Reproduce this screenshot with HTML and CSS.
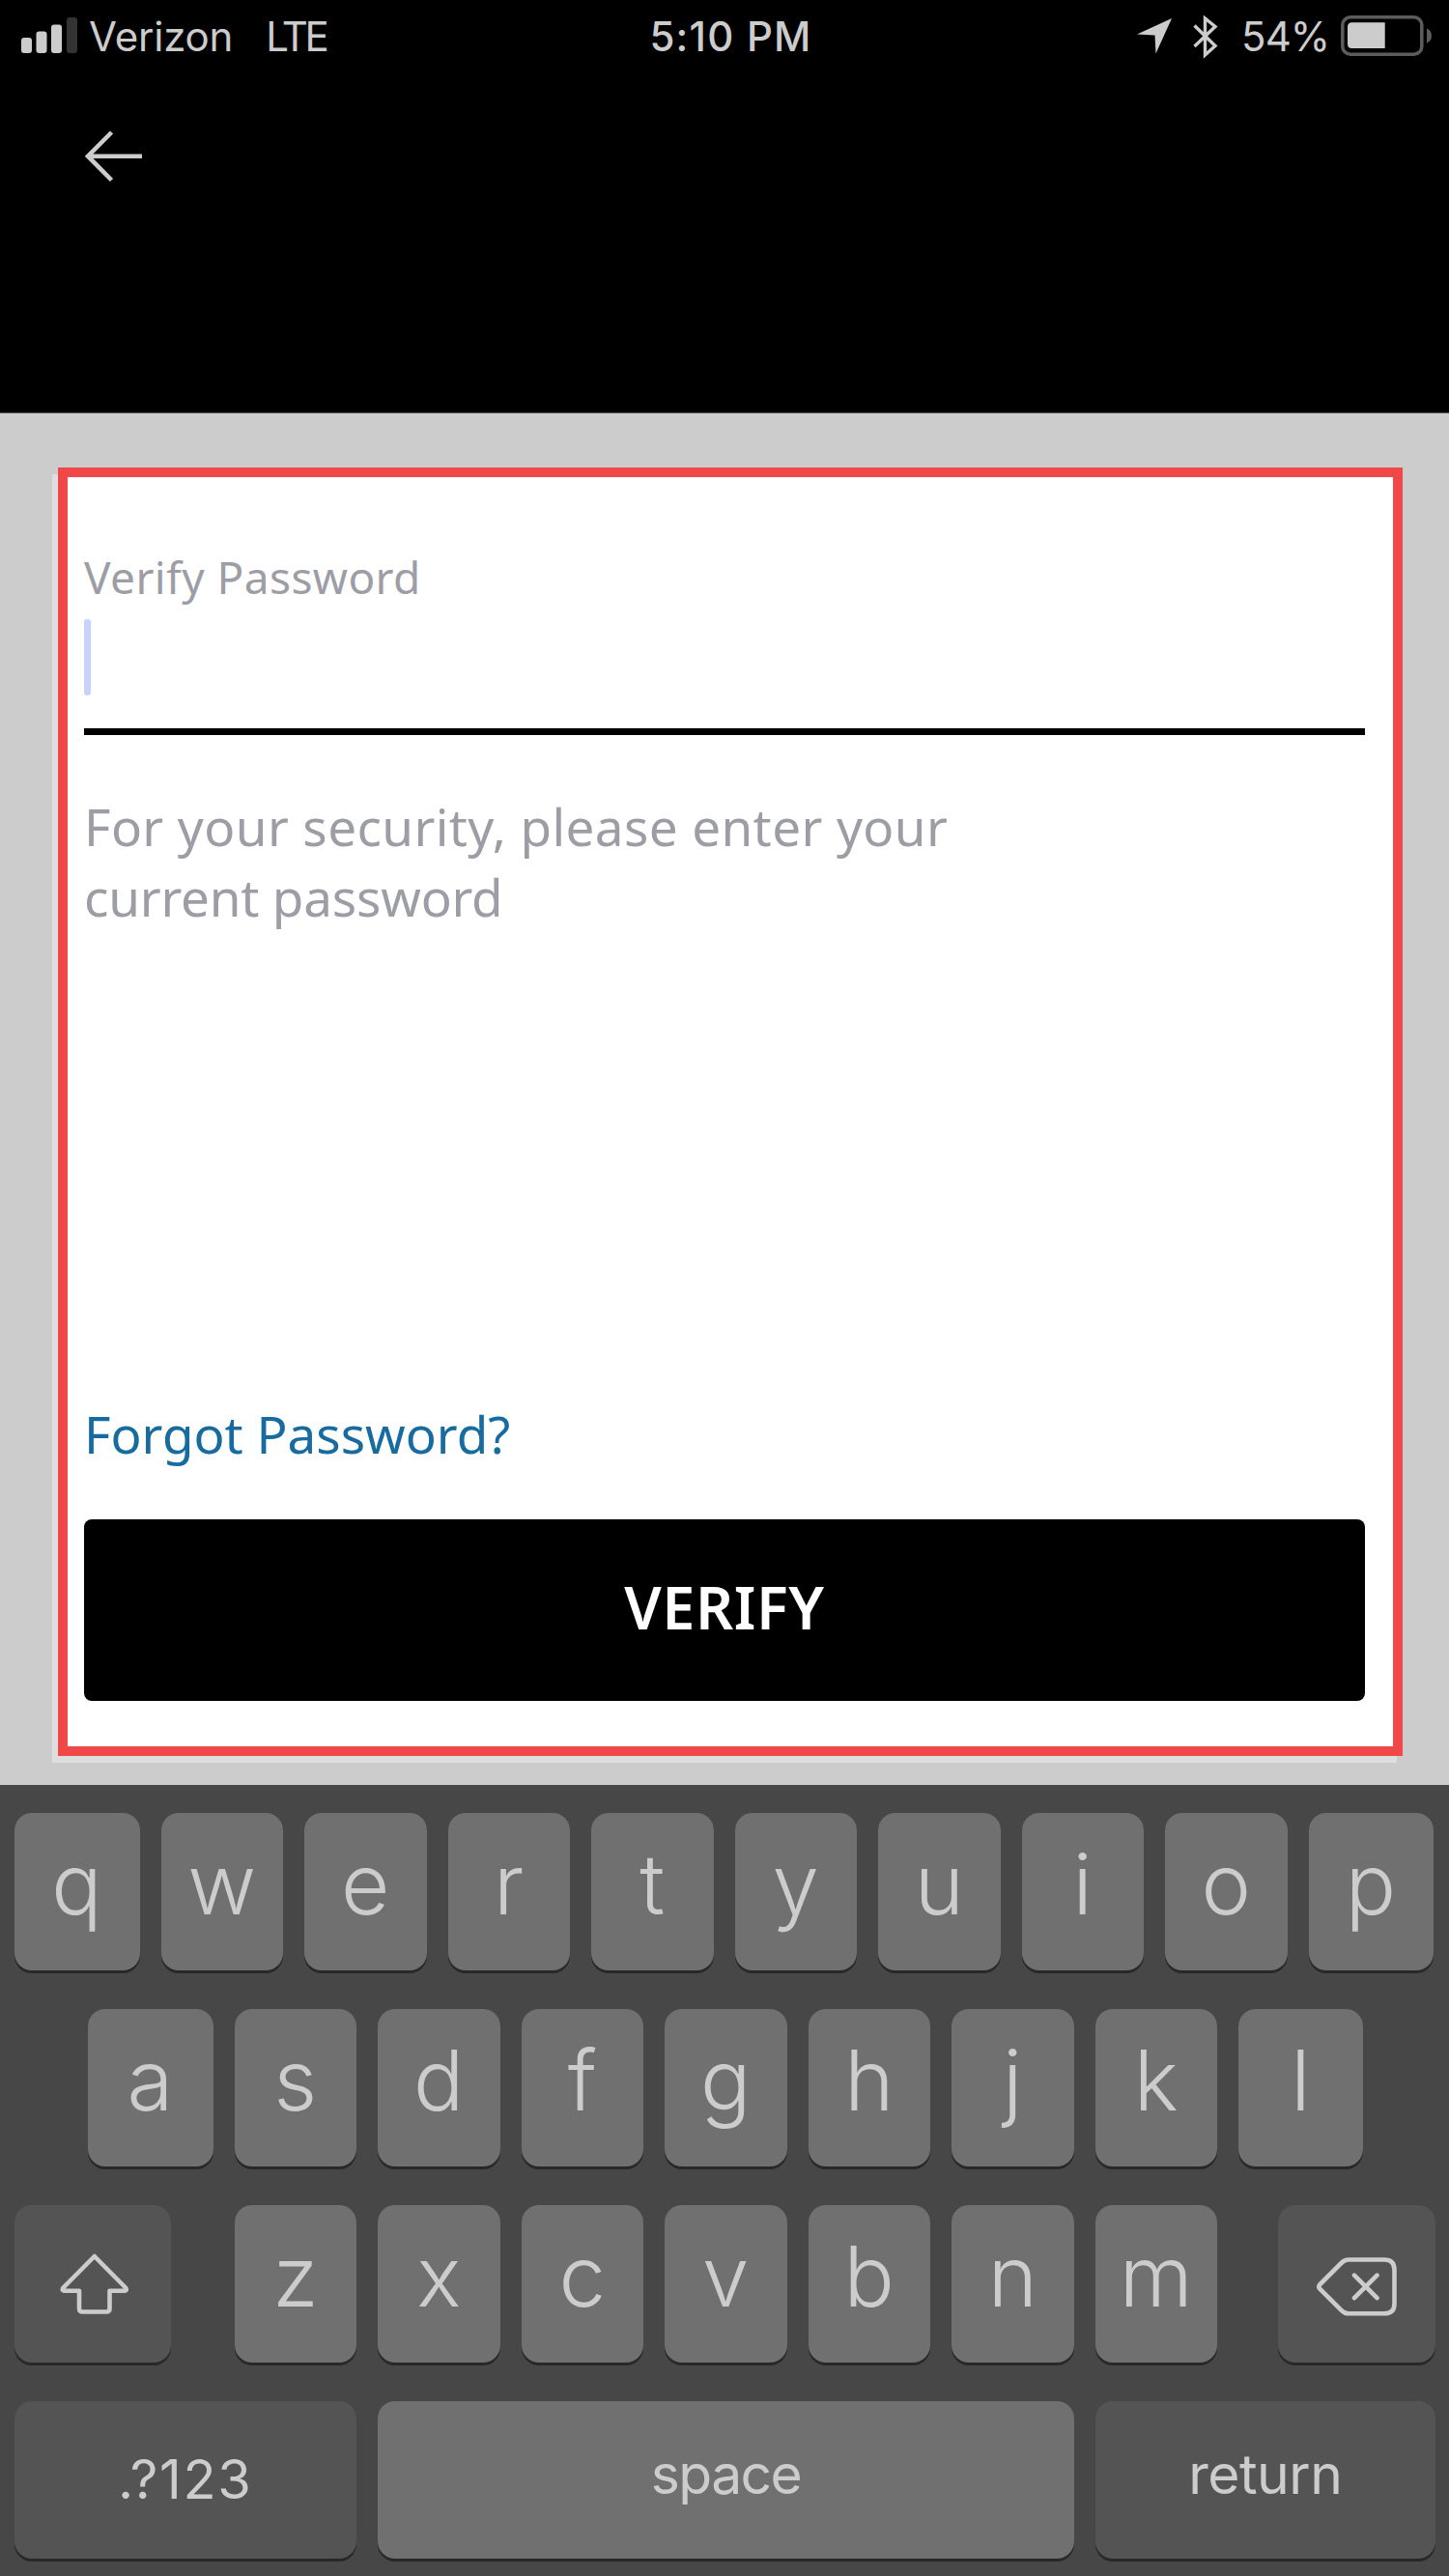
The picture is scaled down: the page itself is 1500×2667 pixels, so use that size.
FILE: index.html
```html
<!DOCTYPE html>
<html lang="en">
<head>
<meta charset="utf-8">
<title>Verify Password</title>
<link rel="stylesheet" href="styles.css">
</head>
<body>
<div class="screen">
  <header class="header">
    <div class="status">
      <div class="status-left">
        <svg class="signal" width="59" height="37" viewBox="0 0 59 37">
          <rect x="0" y="21" width="11" height="16" rx="3" fill="#ccc"/>
          <rect x="15.5" y="14.5" width="11" height="22.5" rx="3" fill="#ccc"/>
          <rect x="31" y="7.500" width="11" height="29.500" rx="3" fill="#ccc"/>
          <rect x="47" y="0" width="11" height="37" rx="3" fill="#333"/>
        </svg>
        <span class="carrier">Verizon</span>
        <span class="network">LTE</span>
      </div>
      <span class="time">5:10 PM</span>
      <div class="status-right">
        <svg class="location" width="36" height="37" viewBox="0 0 36 37"><path d="M36 0 19.500 36.500 18.500 17.500 0 16.500Z" fill="#ccc"/></svg>
        <svg class="bluetooth" width="26" height="46" viewBox="0 0 26 46"><path d="M1.500 11.500 23 32.500 12.500 42V4L23 12.500 1.500 33" fill="none" stroke="#ccc" stroke-width="3.400"/></svg>
        <span class="percent">54%</span>
        <svg class="battery" width="95" height="42" viewBox="0 0 95 42">
          <rect x="1.800" y="1.800" width="82" height="38.400" rx="8" fill="none" stroke="#5c5c5c" stroke-width="3.500"/>
          <path d="M45.700 7.300H11.500Q7 7.300 7 11.800V29.500Q7 34 11.500 34H45.700Z" fill="#ccc"/>
          <path d="M89 13.500Q94 15.500 94 21T89 28.500Z" fill="#5c5c5c"/>
        </svg>
      </div>
    </div>
    <svg class="back" width="60" height="54" viewBox="0 0 60 54"><path d="M27.500 2 3 26.700 27.500 51.500M3 26.700H59" fill="none" stroke="#ccc" stroke-width="4.600"/></svg>
  </header>
  <main class="content">
    <form class="card">
      <label class="label">Verify Password</label>
      <div class="field"><span class="caret"></span></div>
      <p class="hint"><span class="hint-first">For your security, please enter your</span><br><span class="hint-last">current password</span></p>
      <a class="forgot">Forgot Password?</a>
      <button class="verify" type="button">VERIFY</button>
    </form>
  </main>
  <div class="keyboard">
    <div class="row row-top"><span class="key">q</span><span class="key">w</span><span class="key">e</span><span class="key">r</span><span class="key">t</span><span class="key">y</span><span class="key">u</span><span class="key">i</span><span class="key">o</span><span class="key">p</span></div>
    <div class="row row-home"><span class="key">a</span><span class="key">s</span><span class="key">d</span><span class="key">f</span><span class="key">g</span><span class="key">h</span><span class="key">j</span><span class="key">k</span><span class="key">l</span></div>
    <div class="row row-bottom">
      <span class="key dark shift"><svg width="72" height="64" viewBox="0 0 72 64"><path d="M35.800 3 68 35.500Q70 38.500 67 38.700H51.500V57Q51.500 60.500 48 60.500H23.500Q20 60.500 20 57V38.700H4.500Q1.500 38.500 3.500 35.500Z" fill="none" stroke="#ccc" stroke-width="4.600" stroke-linejoin="round"/></svg></span>
      <span class="key">z</span><span class="key">x</span><span class="key">c</span><span class="key">v</span><span class="key">b</span><span class="key">n</span><span class="key">m</span>
      <span class="key dark delete"><svg width="83" height="61" viewBox="0 0 83 61"><path d="M3.500 28 25.500 6Q29 2.500 33 2.500H70Q80.500 2.500 80.500 13V48Q80.500 58.300 70 58.300H33Q29 58.300 25.500 54.800L3.500 32.800Q1.200 30.400 3.500 28ZM39 18.700 62.500 42.200M62.500 18.700 39 42.200" fill="none" stroke="#ccc" stroke-width="4.600" stroke-linecap="round" stroke-linejoin="round"/></svg></span>
    </div>
    <div class="row row-space"><span class="key dark numbers">.?123</span><span class="key word space">space</span><span class="key dark word">return</span></div>
  </div>
</div>
</body>
</html>
```
FILE: styles.css
```css
* { box-sizing: border-box; }
body { margin: 0; background: #000; }
.screen { width: 1500px; height: 2667px; display: flex; flex-direction: column; overflow: hidden; font-family: Inter, "Liberation Sans", sans-serif; }
.header { height: 428px; border-bottom: 1px solid #555; background: #000; color: #ccc; }
.status { height: 75px; display: grid; grid-template-columns: 1fr auto 1fr; align-items: center; font-size: 42px; line-height: 60px; white-space: nowrap; }
.status-left, .status-right { display: flex; align-items: center; }
.status-left { padding-left: 22px; }
.status-right { justify-content: flex-end; padding-right: 17px; }
.signal { margin: 0 11px 2px 0; }
.carrier { letter-spacing: -0.2px; }
.network { margin-left: 34px; letter-spacing: -3.2px; }
.time { padding-left: 13px; font-weight: 500; letter-spacing: 1.2px; }
.bluetooth { margin: 0 24px 0 22px; }
.percent { margin-right: 12px; letter-spacing: -1px; }
.battery { margin-bottom: 2px; }
.back { display: block; margin: 60px 0 0 88px; }
.content { height: 1420px; padding: 56px 48px 30px 60px; background: #ccc; }
.card { height: 1334px; display: flex; flex-direction: column; padding: 73px 29px 47px 17px; border: 10px solid #f04848; background: #fff; box-shadow: -6px 7px 0 #dedede; font-family: "Noto Sans", "Open Sans", sans-serif; color: #9d9da6; }
.label { font-size: 46px; line-height: 60px; letter-spacing: 0.4px; }
.field { height: 134px; padding-top: 14px; border-bottom: 7px solid #000; }
.caret { display: block; width: 7px; height: 79px; border-radius: 3px; background: #c8d2ff; }
.hint { margin: 59px 0 0; font-size: 53px; line-height: 72.5px; }
.hint-first { letter-spacing: 0.4px; }
.hint-last { letter-spacing: -0.2px; }
.forgot { margin-top: auto; font-size: 53px; line-height: 72px; color: #176b9e; }
.verify { height: 188px; margin-top: 52px; padding: 0 0 7px; border: 0; border-radius: 8px; background: #000; color: #fff; font: 600 61px "Noto Sans", "Open Sans", sans-serif; letter-spacing: 0.6px; }
.keyboard { flex: 1; display: flex; flex-direction: column; gap: 40px; padding-top: 29px; background: #474747; color: #ccc; }
.row { display: grid; height: 163px; column-gap: 22px; padding-left: 14.5px; }
.row-top { grid-template-columns: 130px repeat(8, 126.5px) 129px; }
.row-home { padding-left: 90.5px; grid-template-columns: 130px repeat(7, 126.5px) 129px; }
.row-bottom { grid-template-columns: 206px repeat(7, 126.5px) 203.5px; }
.row-space { grid-template-columns: 354.5px 721px 351.5px; }
.key { display: flex; align-items: center; justify-content: center; padding-bottom: 16px; border-radius: 18px; background: #707070; box-shadow: 0 3px 0 #282828; font-size: 87px; font-weight: 350; line-height: 100px; }
.dark { background: #545454; }
.shift { width: 162.5px; padding: 0 0 0 5px; }
.delete { width: 163px; justify-self: end; padding: 5px 0 0; }
.numbers { padding-bottom: 2px; font-size: 56px; font-weight: 400; letter-spacing: 1.6px; }
.word { padding-bottom: 11px; font-size: 57px; font-weight: 400; letter-spacing: -0.5px; }
.space { letter-spacing: -1.6px; }
```
